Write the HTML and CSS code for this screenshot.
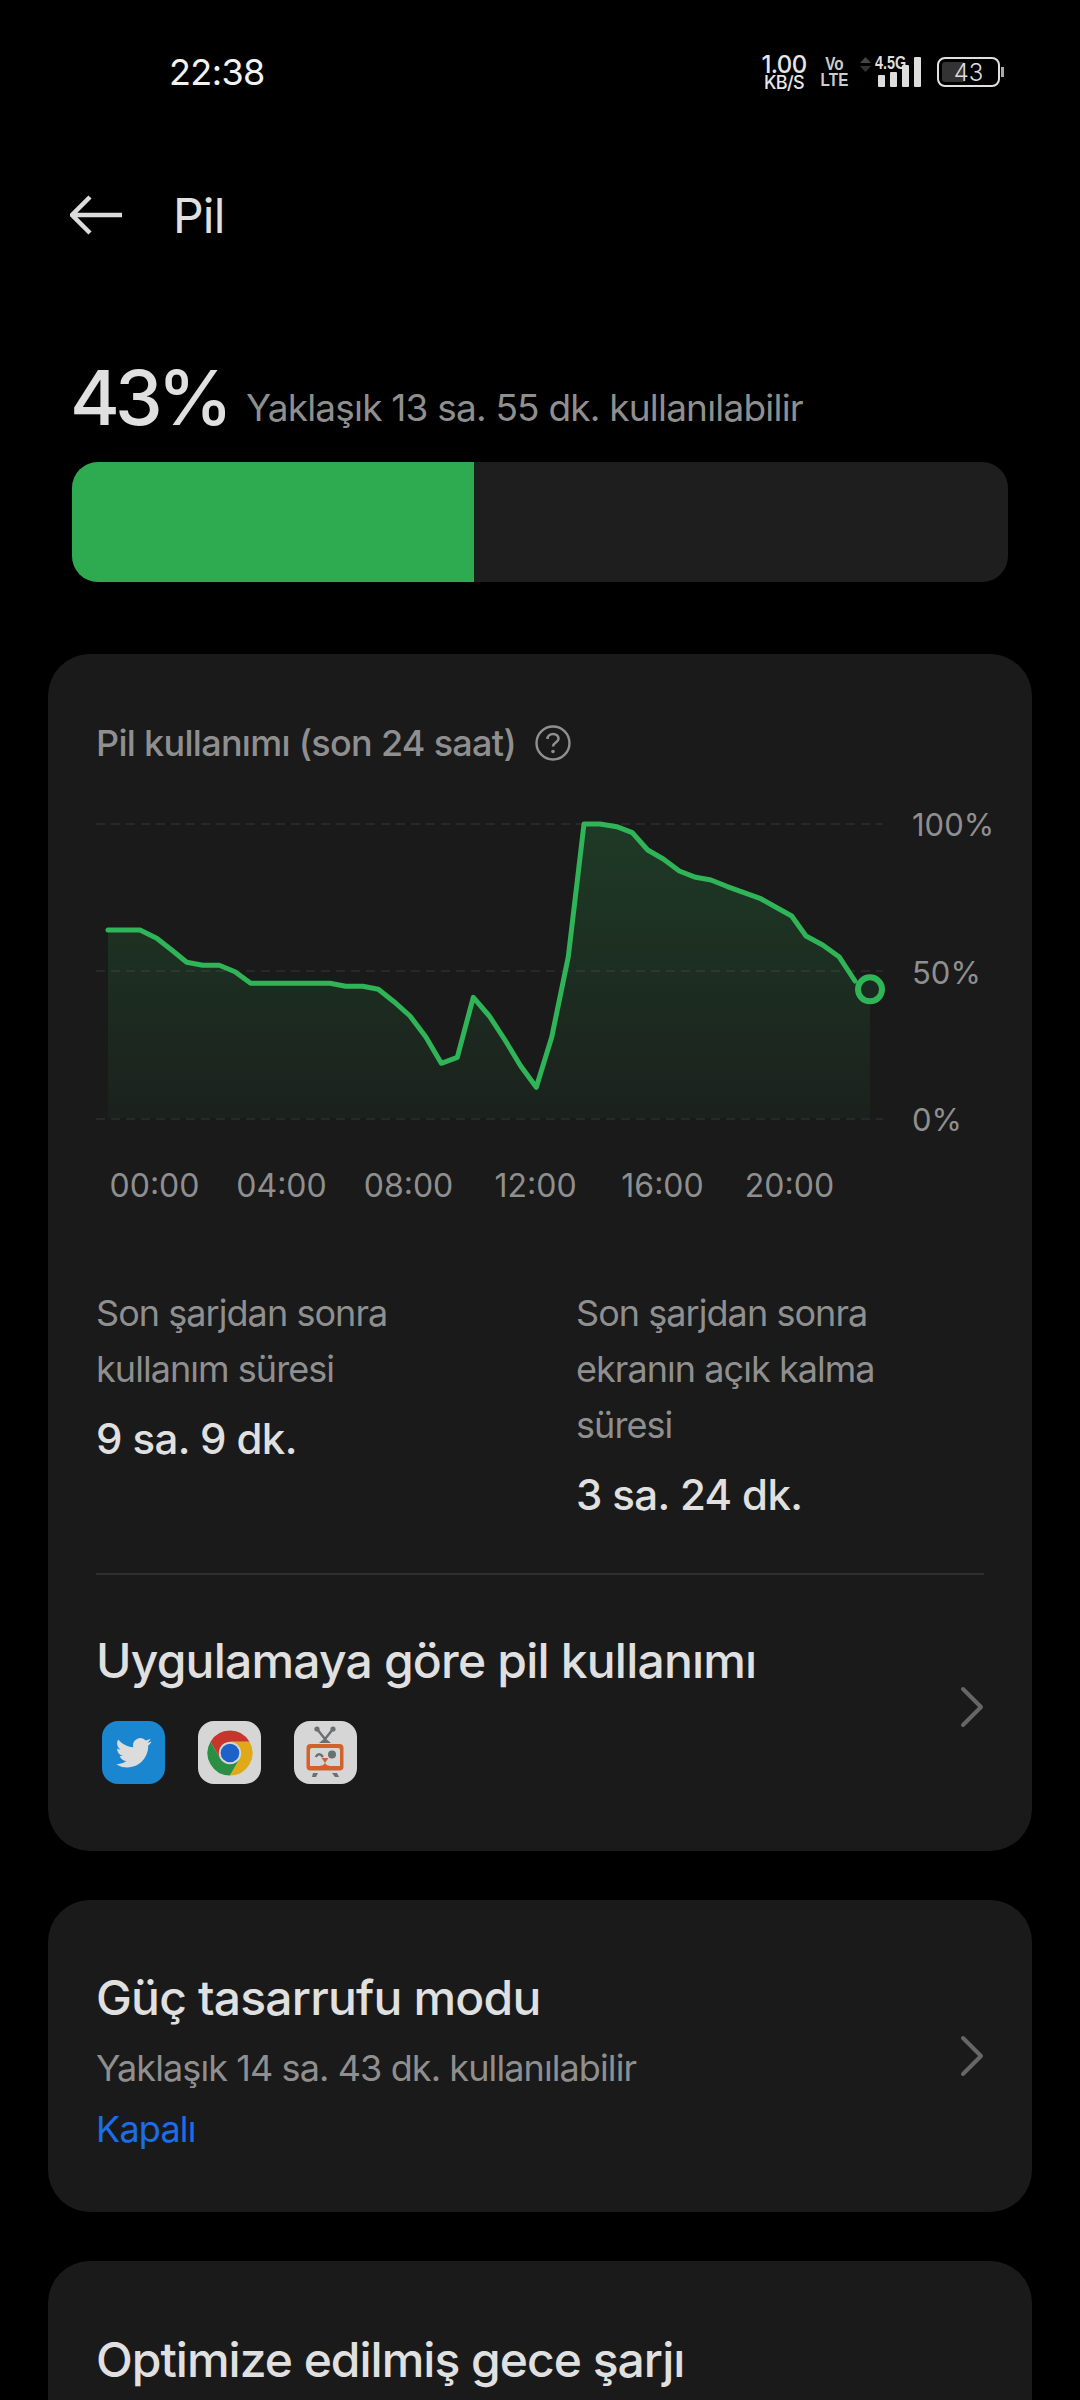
FILE: index.html
```html
<!DOCTYPE html>
<html lang="tr">
<head>
  <meta charset="UTF-8">
  <meta name="viewport" content="width=device-width, initial-scale=1.0">
  <title>Pil</title>
  <link rel="stylesheet" href="styles.css">
</head>
<body>

<div class="status-bar">
  <span class="clock">22:38</span>
  <div class="status-icons">
    <div class="speed"><b>1.00</b><span>KB/S</span></div>
    <div class="volte"><span>Vo</span><span>LTE</span></div>
    <div class="signal">
      <svg class="updown" width="11" height="15" viewBox="0 0 11 15"><path d="M5.500 0l5.500 6H0z" fill="#444"/><path d="M5.500 15l5.500-6H0z" fill="#333"/></svg>
      <div class="signal-right">
        <span class="net">4.5G</span>
        <div class="bars"><i class="b1"></i><i class="b2"></i><i class="b3"></i><i class="b4"></i></div>
      </div>
    </div>
    <div class="battery">
      <div class="battery-body"><div class="battery-fill"></div><span>43</span></div>
      <div class="battery-tip"></div>
    </div>
  </div>
</div>

<div class="toolbar">
  <svg class="back" width="52" height="40" viewBox="0 0 52 40"><path d="M52 20H3M20 2L2 20l18 18" fill="none" stroke="#dcdcdc" stroke-width="4.500"/></svg>
  <h1>Pil</h1>
</div>

<div class="summary">
  <div class="summary-text"><span class="percent">43%</span><span class="remaining">Yaklaşık 13 sa. 55 dk. kullanılabilir</span></div>
  <div class="level"><div class="level-fill"></div></div>
</div>

<div class="card usage-card">
  <div class="usage-title"><span>Pil kullanımı (son 24 saat)</span>
    <svg width="36" height="36" viewBox="0 0 36 36"><circle cx="18" cy="18" r="16.500" fill="none" stroke="#8f8f8f" stroke-width="2.400"/><path d="M12.500 14c0-3 2.400-5 5.500-5s5.500 2 5.500 4.800c0 3.800-5.500 3.700-5.500 7.700" fill="none" stroke="#8f8f8f" stroke-width="2.600"/><circle cx="18" cy="26.500" r="1.800" fill="#8f8f8f"/></svg>
  </div>

  <div class="chart">
    <svg class="chart-svg" width="888" height="320" viewBox="0 0 888 320">
      <defs>
        <linearGradient id="area" x1="0" y1="0" x2="0" y2="1">
          <stop offset="0" stop-color="#2dab50" stop-opacity="0.22"/>
          <stop offset="1" stop-color="#2dab50" stop-opacity="0.05"/>
        </linearGradient>
      </defs>
      <g stroke="#2e2e2e" stroke-width="1.500" stroke-dasharray="9 6">
        <line x1="0" y1="10" x2="787" y2="10"/>
        <line x1="0" y1="157" x2="787" y2="157"/>
        <line x1="0" y1="305" x2="787" y2="305"/>
      </g>
      <path fill="url(#area)" d="M12 116L44 116 60.700 124.300 75.700 136 90.700 148.300 106.700 151.300 123.300 151.300 139 157.700 154.700 169.300 234 169.300 249.700 172.300 266.700 172.300 282.300 175.300 298 187.700 314 202 329.700 222.700 345.300 249.300 361.300 243.300 377.300 183.300 393.300 202 409 226 424.700 252 440.300 273.300 455.700 223.300 472.300 142.700 488 10 504 10 520.700 12.700 536.300 18.700 551.700 36 567.300 45 583.300 57 599.700 63.300 615 66 630.700 72.300 647.300 78.300 664 84.300 680 93.300 695.700 102 710 122 726.700 131 743 142.700 759 167 774 175.300V304H12Z"/>
      <polyline fill="none" stroke="#2fb457" stroke-width="5" stroke-linecap="round" stroke-linejoin="round" points="12,116 44,116 60.700,124.300 75.700,136 90.700,148.300 106.700,151.300 123.300,151.300 139,157.700 154.700,169.300 234,169.300 249.700,172.300 266.700,172.300 282.300,175.300 298,187.700 314,202 329.700,222.700 345.300,249.300 361.300,243.300 377.300,183.300 393.300,202 409,226 424.700,252 440.300,273.300 455.700,223.300 472.300,142.700 488,10 504,10 520.700,12.700 536.300,18.700 551.700,36 567.300,45 583.300,57 599.700,63.300 615,66 630.700,72.300 647.300,78.300 664,84.300 680,93.300 695.700,102 710,122 726.700,131 743,142.700 759,167"/>
      <circle cx="774" cy="175.300" r="12" fill="#1b2a20" stroke="#2fb457" stroke-width="6"/>
    </svg>
    <div class="y-labels"><span>100%</span><span>50%</span><span>0%</span></div>
  </div>

  <div class="x-labels">
    <span>00:00</span><span>04:00</span><span>08:00</span><span>12:00</span><span>16:00</span><span>20:00</span>
  </div>

  <div class="stats">
    <div class="stat">
      <p>Son şarjdan sonra kullanım süresi</p>
      <strong>9 sa. 9 dk.</strong>
    </div>
    <div class="stat">
      <p>Son şarjdan sonra ekranın açık kalma süresi</p>
      <strong>3 sa. 24 dk.</strong>
    </div>
  </div>

  <div class="divider"></div>

  <div class="row">
    <div class="row-main">
      <h2>Uygulamaya göre pil kullanımı</h2>
      <div class="app-icons">
        <div class="app-icon twitter">
          <svg width="36" height="30" viewBox="0 0 24 20"><path fill="#dcdcdc" d="M23.600 2.400c-.9.400-1.800.650-2.800.780 1-.6 1.800-1.550 2.150-2.700-.95.560-2 .97-3.100 1.180A4.900 4.900 0 0 0 11.500 6.100C7.450 5.900 3.850 3.950 1.450 1 .1 3.300.8 6.200 2.950 7.650c-.8-.03-1.550-.25-2.200-.6v.06c0 2.370 1.680 4.350 3.920 4.800-.72.200-1.480.22-2.200.08.62 1.950 2.430 3.360 4.570 3.400A9.800 9.800 0 0 1 0 17.420 13.850 13.850 0 0 0 7.500 19.600c9 0 13.950-7.450 13.950-13.900 0-.2 0-.42-.02-.63.96-.7 1.790-1.550 2.170-2.670z"/></svg>
        </div>
        <div class="app-icon grey">
          <svg width="46" height="46" viewBox="0 0 46 46">
            <path fill="#c8352b" d="M42.490 11.750A22.500 22.500 0 0 0 3.510 11.750L13.260 28.625A11.250 11.250 0 0 1 23 11.750Z"/>
            <path fill="#2a8f43" d="M3.510 11.750A22.500 22.500 0 0 0 23 45.500L32.740 28.625A11.250 11.250 0 0 1 13.260 28.625Z"/>
            <path fill="#dfa917" d="M23 45.500A22.500 22.500 0 0 0 42.490 11.750L23 11.750A11.250 11.250 0 0 1 32.740 28.625Z"/>
            <circle cx="23" cy="23" r="9.300" fill="#1c62c9"/>
          </svg>
        </div>
        <div class="app-icon grey">
          <svg width="63" height="63" viewBox="0 0 63 63">
            <path d="M23 8L31 18L39 8" stroke="#6b6f70" stroke-width="2.400" fill="none"/>
            <circle cx="23" cy="8" r="2.600" fill="#6b6f70"/><circle cx="39" cy="8" r="2.600" fill="#6b6f70"/>
            <path d="M25 22l6-5 6 5z" fill="#6b6f70"/>
            <rect x="12.500" y="23" width="37" height="26.500" rx="4" fill="#d1622c"/>
            <path d="M16 29a2 2 0 0 1 2-2h26a2 2 0 0 1 2 2v16h-9c-2 0-6-1-6-4 0 3-4 4-6 4h-9z" fill="#d6d6d6"/>
            <path d="M21.700 36Q25 30.500 29 36" stroke="#6b6f70" stroke-width="2.400" fill="none"/>
            <circle cx="38" cy="33.500" r="4" fill="#6b6f70"/>
            <path d="M27.500 37h7l-3.500 5z" fill="#d1622c"/>
            <path d="M19 52h5l-2 4h-4zM38 52h5l2 4h-4z" fill="#6b6f70"/>
          </svg>
        </div>
      </div>
    </div>
    <svg class="chevron chevron-up" width="24" height="42" viewBox="0 0 24 42"><path d="M3 3l18 18L3 39" fill="none" stroke="#666" stroke-width="4" stroke-linecap="round" stroke-linejoin="round"/></svg>
  </div>
</div>

<div class="card mode-card">
  <div class="row">
    <div class="row-main">
      <h2>Güç tasarrufu modu</h2>
      <p class="sub">Yaklaşık 14 sa. 43 dk. kullanılabilir</p>
      <p class="off">Kapalı</p>
    </div>
    <svg class="chevron" width="24" height="42" viewBox="0 0 24 42"><path d="M3 3l18 18L3 39" fill="none" stroke="#666" stroke-width="4" stroke-linecap="round" stroke-linejoin="round"/></svg>
  </div>
</div>

<div class="card night-card">
  <h2>Optimize edilmiş gece şarjı</h2>
</div>

</body>
</html>
```

FILE: styles.css
```css
html, body {
  margin: 0;
  height: 2400px;
  overflow: hidden;
}
body {
  background-color: #000;
  font-family: Inter, "Noto Sans", sans-serif;
  color: #e0e0e0;
}
p, h1, h2 {
  margin: 0;
  font-weight: 400;
}

/* status bar */
.status-bar {
  height: 177px;
  box-sizing: border-box;
  padding: 50px 76px 0 169px;
  display: flex;
  justify-content: space-between;
  align-items: flex-start;
}
.clock {
  font-size: 36px;
  line-height: 44px;
  letter-spacing: -.6px;
  color: #f2f2f2;
}
.status-icons {
  display: flex;
  align-items: center;
  height: 44px;
}
.speed {
  display: flex;
  flex-direction: column;
  align-items: center;
  width: 48px;
  color: #e6e6e6;
}
.speed b {
  font-size: 24px;
  line-height: 20px;
  font-weight: 500;
  letter-spacing: -.6px;
}
.speed span {
  margin-top: 1px;
  font-size: 18px;
  line-height: 14px;
  font-weight: 500;
  letter-spacing: -.6px;
}
.volte {
  display: flex;
  flex-direction: column;
  align-items: center;
  width: 21px;
  margin-left: 16px;
  font-family: "Liberation Sans", sans-serif;
  font-size: 18px;
  line-height: 16px;
  font-weight: 700;
  color: #ccc;
  transform: scaleX(.85);
}
.signal {
  display: flex;
  align-items: flex-start;
  margin-left: 15px;
}
.updown {
  margin-right: 4px;
}
.signal-right {
  position: relative;
  display: flex;
  align-items: flex-end;
  justify-content: flex-end;
  width: 46px;
  height: 30px;
}
.net {
  position: absolute;
  left: 0;
  top: -1px;
  font-family: "Liberation Sans", sans-serif;
  font-size: 18px;
  line-height: 15px;
  font-weight: 700;
  color: #ddd;
  transform: scaleX(.8);
  transform-origin: left;
}
.bars {
  display: flex;
  align-items: flex-end;
  gap: 5px;
}
.bars i {
  display: block;
  width: 7px;
  background-color: #ddd;
  border-radius: 1px;
}
.b1 { height: 12px; }
.b2 { height: 15px; }
.b3 { height: 22px; }
.b4 { height: 30px; }
.battery {
  display: flex;
  align-items: center;
  margin-left: 16px;
}
.battery-body {
  position: relative;
  box-sizing: border-box;
  width: 63px;
  height: 30px;
  border: 2px solid #e0e0e0;
  border-radius: 8px;
  display: flex;
  align-items: center;
  justify-content: center;
}
.battery-fill {
  position: absolute;
  left: 3px;
  top: 3px;
  bottom: 3px;
  width: 23px;
  background-color: #333;
  border-radius: 3px;
}
.battery-body span {
  position: relative;
  font-size: 24px;
  font-weight: 300;
  color: #ddd;
}
.battery-tip {
  width: 3px;
  height: 10px;
  margin-left: 1px;
  background-color: #aaa;
}

/* toolbar */
.toolbar {
  height: 76px;
  padding-left: 70px;
  display: flex;
  align-items: center;
}
.back {
  margin-right: 51px;
}
.toolbar h1 {
  font-size: 48px;
  font-weight: 400;
  letter-spacing: -.8px;
  color: #e0e0e0;
}

/* battery summary */
.summary {
  padding: 108px 72px 0;
}
.summary-text {
  display: flex;
  align-items: flex-end;
  gap: 21px;
  height: 72px;
}
.percent {
  margin-left: -2px;
  font-size: 76px;
  font-weight: 500;
  letter-spacing: -5px;
  color: #e0e0e0;
  line-height: 72px;
}
.remaining {
  margin-bottom: 3px;
  margin-left: -3px;
  font-size: 37px;
  line-height: 44px;
  letter-spacing: -.8px;
  color: #8f8f8f;
}
.level {
  height: 120px;
  margin-top: 29px;
  background-color: #1e1e1e;
  border-radius: 26px;
  overflow: hidden;
}
.level-fill {
  width: 43%;
  height: 100%;
  background-color: #2eaa50;
}

/* cards */
.card {
  margin: 0 48px;
  background-color: #1a1a1a;
  border-radius: 42px;
  padding: 0 48px;
}
.usage-card {
  margin-top: 72px;
  height: 1197px;
  padding-top: 64px;
  box-sizing: border-box;
}
.usage-title {
  display: flex;
  align-items: center;
  gap: 19px;
  height: 50px;
  font-size: 36px;
  font-weight: 500;
  letter-spacing: -.7px;
  color: #8f8f8f;
}
.chart {
  display: flex;
  margin-top: 46px;
  height: 320px;
}
.chart-svg {
  flex: none;
}
.y-labels {
  position: relative;
  width: 80px;
  font-size: 31px;
  color: #8f8f8f;
}
.y-labels span {
  position: absolute;
  left: -72px;
}
.y-labels span:nth-child(1) { top: -8px; }
.y-labels span:nth-child(2) { top: 140px; }
.y-labels span:nth-child(3) { top: 287px; }
.x-labels {
  display: grid;
  grid-template-columns: repeat(6, 127px);
  margin: 33px 0 0 -5px;
  font-size: 32px;
  line-height: 38px;
  text-align: center;
  color: #8f8f8f;
}
.stats {
  display: grid;
  grid-template-columns: 480px 1fr;
  margin-top: 80px;
}
.stat p {
  font-size: 36px;
  line-height: 56px;
  letter-spacing: -.95px;
  color: #8f8f8f;
  width: 340px;
}
.stat strong {
  display: block;
  margin-top: 16px;
  font-size: 42px;
  line-height: 52px;
  font-weight: 500;
  letter-spacing: -.6px;
  color: #e0e0e0;
}
.divider {
  height: 2px;
  margin-top: 52px;
  background-color: #2e2e2e;
}
.row {
  display: flex;
  align-items: center;
  justify-content: space-between;
}
.usage-card .row {
  margin-top: 56px;
}
.row h2, .night-card h2 {
  font-size: 48px;
  line-height: 60px;
  font-weight: 500;
  letter-spacing: -.8px;
  color: #e0e0e0;
}
.night-card h2 {
  letter-spacing: -1px;
}
.app-icons {
  display: flex;
  gap: 33px;
  padding-left: 6px;
  margin-top: 30px;
}
.app-icon {
  width: 63px;
  height: 63px;
  border-radius: 16px;
  display: flex;
  align-items: center;
  justify-content: center;
}
.twitter {
  background-color: #1a86d0;
}
.grey {
  background-color: #d6d6d6;
}
.chevron {
  flex: none;
}
.chevron-up {
  margin-bottom: 2px;
}
.mode-card {
  margin-top: 49px;
  height: 312px;
}
.mode-card .row {
  height: 100%;
}
.mode-card .row-main {
  align-self: flex-start;
  padding-top: 68px;
}
.sub {
  margin-top: 12px;
  font-size: 36px;
  line-height: 56px;
  letter-spacing: -.9px;
  color: #8f8f8f;
}
.off {
  margin-top: 8px;
  font-size: 36px;
  line-height: 50px;
  letter-spacing: -.8px;
  color: #1a6fe8;
}
.night-card {
  margin-top: 49px;
  padding-top: 69px;
  height: 300px;
}
```
